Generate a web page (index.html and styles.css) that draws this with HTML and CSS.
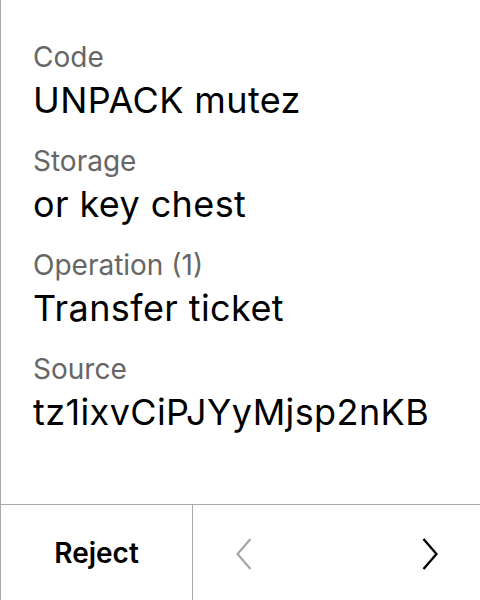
FILE: index.html
```html
<!DOCTYPE html>
<html>
<head>
<meta charset="utf-8">
<link rel="stylesheet" href="styles.css">
</head>
<body>
<div class="screen">
  <div class="content">
    <div class="pair">
      <div class="label">Code</div>
      <div class="value">UNPACK mutez</div>
    </div>
    <div class="pair">
      <div class="label">Storage</div>
      <div class="value">or key chest</div>
    </div>
    <div class="pair">
      <div class="label">Operation (1)</div>
      <div class="value">Transfer ticket</div>
    </div>
    <div class="pair">
      <div class="label">Source</div>
      <div class="value">tz1ixvCiPJYyMjsp2nKB</div>
    </div>
  </div>
  <div class="footer">
    <div class="reject">Reject</div>
    <div class="nav">
      <div class="navbtn prev">
        <svg width="16" height="32" viewBox="0 0 16 32"><polyline points="14.5,1 1.5,16 14.5,31" fill="none" stroke="#a6a6a6" stroke-width="2.2"/></svg>
      </div>
      <div class="navbtn next">
        <svg width="16" height="32" viewBox="0 0 16 32"><polyline points="1.5,1 14.5,16 1.5,31" fill="none" stroke="#000" stroke-width="2.4"/></svg>
      </div>
    </div>
  </div>
</div>
</body>
</html>
```
FILE: styles.css
```css
html, body {
  margin: 0;
  padding: 0;
  background: #fff;
}
.screen {
  width: 480px;
  height: 600px;
  box-sizing: border-box;
  border-left: 1px solid #a8a8a8;
  display: flex;
  flex-direction: column;
  font-family: Inter, "Noto Sans", sans-serif;
}
.content {
  flex: 1;
  padding: 41px 0 0 32px;
  display: flex;
  flex-direction: column;
  gap: 18px;
}
.pair {
  display: flex;
  flex-direction: column;
}
.label {
  font-size: 28px;
  line-height: 32px;
  color: #666;
}
.value {
  font-size: 36px;
  line-height: 54px;
  letter-spacing: 0.4px;
  color: #000;
}
.footer {
  height: 95px;
  border-top: 1px solid #a8a8a8;
  display: flex;
}
.reject {
  width: 191px;
  border-right: 1px solid #a8a8a8;
  display: flex;
  align-items: center;
  justify-content: center;
  font-size: 28px;
  font-weight: 600;
  color: #000;
}
.nav {
  flex: 1;
  display: flex;
  justify-content: space-between;
}
.navbtn {
  width: 96px;
  box-sizing: border-box;
  display: flex;
  align-items: center;
  justify-content: center;
}
.navbtn.prev {
  padding-left: 6px;
  padding-top: 2px;
}
.navbtn.next {
  padding-right: 4px;
  padding-top: 2px;
}
```
